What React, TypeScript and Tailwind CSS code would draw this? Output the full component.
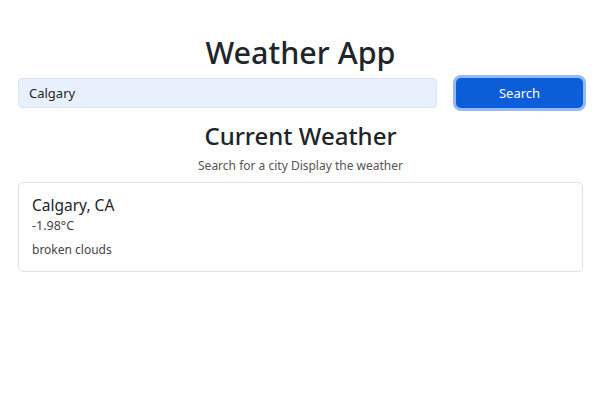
export default function App() {
  return (
    <div className="min-h-screen bg-white pl-[18px] pr-[17px] pt-[31px] text-[#212529] font-['Noto_Sans',sans-serif]">
      <h1 className="text-center text-[30.5px] leading-[42px] font-medium">Weather App</h1>

      <div className="mt-[4px] flex items-center gap-[19px]">
        <input
          defaultValue="Calgary"
          className="h-[30px] flex-1 rounded-[4px] border border-[#dfe5ef] bg-[#e8f0fe] px-[10px] pt-[1px] text-[13px] text-[#212529] outline-none"
        />
        <button className="mt-[1px] h-[30px] w-[127px] rounded-[5px] bg-[#0b5ed7] pt-[1px] text-[13px] text-white ring-[3px] ring-[#93b9f6]">
          Search
        </button>
      </div>

      <h2 className="mt-[12px] text-center text-[24px] leading-[32px] font-medium">Current Weather</h2>
      <p className="mt-[5px] text-center text-[12px] leading-[18px] text-[#555]">
        Search for a city Display the weather
      </p>

      <div className="mt-[7px] h-[90px] rounded-[5px] border border-[#dee2e6] px-[13px] pt-[11px]">
        <div className="text-[15.5px] leading-[22px]">Calgary, CA</div>
        <div className="text-[12.5px] leading-[20px] text-[#444]">-1.98°C</div>
        <div className="mt-[5px] text-[12px] leading-[18px] text-[#444]">broken clouds</div>
      </div>
    </div>
  );
}
